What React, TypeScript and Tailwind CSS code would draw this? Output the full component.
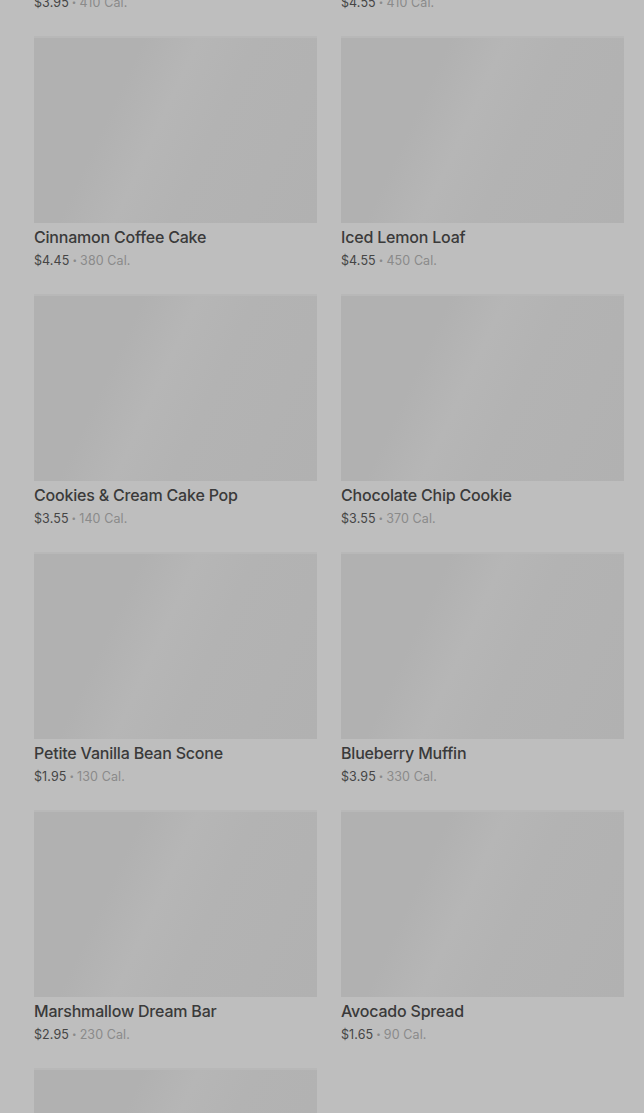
import React from "react";

const items = [
  { name: "Banana Nut Bread", price: "$3.95", cal: "410 Cal." },
  { name: "Pumpkin Loaf", price: "$4.55", cal: "410 Cal." },
  { name: "Cinnamon Coffee Cake", price: "$4.45", cal: "380 Cal." },
  { name: "Iced Lemon Loaf", price: "$4.55", cal: "450 Cal." },
  { name: "Cookies & Cream Cake Pop", price: "$3.55", cal: "140 Cal." },
  { name: "Chocolate Chip Cookie", price: "$3.55", cal: "370 Cal." },
  { name: "Petite Vanilla Bean Scone", price: "$1.95", cal: "130 Cal." },
  { name: "Blueberry Muffin", price: "$3.95", cal: "330 Cal." },
  { name: "Marshmallow Dream Bar", price: "$2.95", cal: "230 Cal." },
  { name: "Avocado Spread", price: "$1.65", cal: "90 Cal." },
  { name: "Butter Croissant", price: "$3.25", cal: "260 Cal." },
];

function Card({ name, price, cal }: { name: string; price: string; cal: string }) {
  return (
    <div className="flex flex-col">
      <div className="h-[187px] w-full bg-[linear-gradient(115deg,#b1b1b1_0%,#b1b1b1_30%,#b6b6b6_45%,#b3b3b3_60%,#b1b1b1_100%)] shadow-[inset_0_2px_0_#b8b8b8]" />
      <div className="mt-[2px] text-[16px] leading-[24px] font-medium text-[#3a3a3a] tracking-[-0.2px]">{name}</div>
      <div className="mt-[2px] flex items-center text-[12.5px] leading-[19px] tracking-[0.1px]">
        <span className="text-[#454545]">{price}</span>
        <span className="mx-[3px] text-[8px] text-[#8a8a8a]">•</span>
        <span className="text-[#8a8a8a]">{cal}</span>
      </div>
    </div>
  );
}

export default function App() {
  return (
    <div
      className="w-[644px] h-[1113px] overflow-hidden bg-[#bebebe]"
      style={{ fontFamily: "Inter, 'Noto Sans', sans-serif" }}
    >
      <div className="mt-[-222px] pl-[34px] pr-[20px] grid grid-cols-2 gap-x-6 gap-y-6">
        {items.map((it) => (
          <Card key={it.name} {...it} />
        ))}
      </div>
    </div>
  );
}
